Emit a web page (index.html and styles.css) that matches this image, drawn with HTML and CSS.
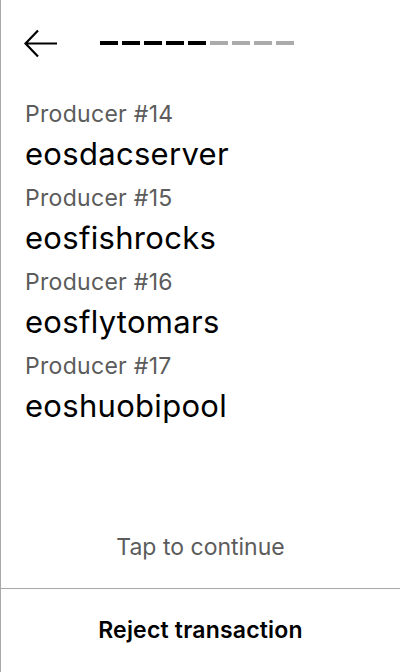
FILE: index.html
```html
<!DOCTYPE html>
<html>
<head>
<meta charset="utf-8">
<link rel="stylesheet" href="styles.css">
</head>
<body>
<div class="screen">
  <header class="header">
    <button class="back" aria-label="Back">
      <svg width="34" height="30" viewBox="0 0 34 30">
        <path d="M1.5 15.5 H33 M14 2.5 L1.5 15.5 L14 28.5" fill="none" stroke="#000" stroke-width="2.2" stroke-linecap="butt" stroke-linejoin="miter"/>
      </svg>
    </button>
    <div class="progress">
      <span class="dash on"></span><span class="dash on"></span><span class="dash on"></span><span class="dash on"></span><span class="dash on"></span><span class="dash"></span><span class="dash"></span><span class="dash"></span><span class="dash"></span>
    </div>
  </header>
  <main class="list">
    <div class="item"><div class="label">Producer #14</div><div class="name">eosdacserver</div></div>
    <div class="item"><div class="label">Producer #15</div><div class="name">eosfishrocks</div></div>
    <div class="item"><div class="label">Producer #16</div><div class="name">eosflytomars</div></div>
    <div class="item"><div class="label">Producer #17</div><div class="name">eoshuobipool</div></div>
  </main>
  <div class="tap">Tap to continue</div>
  <div class="reject">Reject transaction</div>
</div>
</body>
</html>
```
FILE: styles.css
```css
html, body {
  margin: 0;
  padding: 0;
  background: #fff;
}
body {
  font-family: Inter, "Noto Sans", sans-serif;
  color: #000;
}
.screen {
  width: 399px;
  height: 672px;
  border-left: 1px solid #a8a8a8;
  display: flex;
  flex-direction: column;
}
.header {
  height: 86px;
  display: flex;
  align-items: center;
  padding-left: 23px;
  box-sizing: border-box;
}
.back {
  border: 0;
  background: none;
  padding: 0;
  width: 34px;
  height: 30px;
  display: block;
}
.back svg { display: block; }
.progress {
  margin-left: 42px;
  display: flex;
  gap: 4px;
}
.dash {
  width: 18px;
  height: 4px;
  background: #ababab;
}
.dash.on { background: #000; }
.list {
  flex: 1;
  padding: 14px 0 0 24px;
}
.item {
  display: flex;
  flex-direction: column;
  margin-bottom: 11px;
}
.label {
  font-size: 23px;
  line-height: 28px;
  color: #5c5c5c;
  letter-spacing: 0.3px;
}
.name {
  font-size: 31px;
  line-height: 38px;
  margin-top: 7px;
  letter-spacing: 0.3px;
}
.tap {
  text-align: center;
  font-size: 23px;
  color: #5c5c5c;
  height: 82px;
  line-height: 80px;
  padding-bottom: 2px;
  box-sizing: border-box;
  border-bottom: 1px solid #a8a8a8;
}
.reject {
  height: 83px;
  line-height: 83px;
  text-align: center;
  font-size: 23px;
  font-weight: 600;
  letter-spacing: 0.2px;
}
```
